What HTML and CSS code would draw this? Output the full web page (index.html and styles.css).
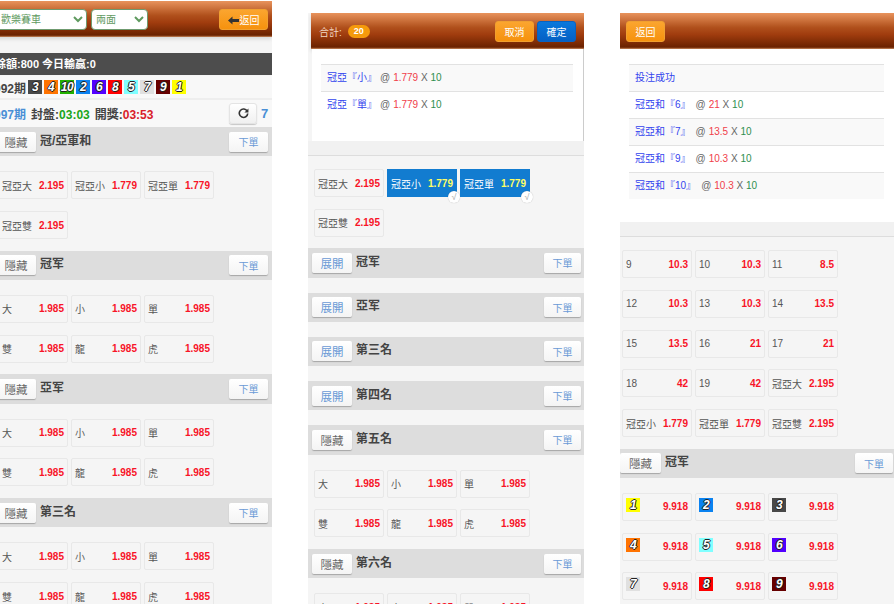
FILE: index.html
```html
<!DOCTYPE html>
<html lang="zh-Hant">
<head>
  <meta charset="UTF-8">
  <title>歡樂賽車</title>
  <link rel="stylesheet" href="styles.css">
</head>
<body>
  <!-- Betting page -->
  <div class="panel panel-left">
    <div class="topbar">
      <select class="game-select"><option>歡樂賽車</option></select>
      <select class="type-select"><option>兩面</option></select>
      <button class="btn-orange btn-back">
        <svg width="11" height="9" viewBox="0 0 11 9"><path d="M0 4.5 4.5 0.5V3H11V6H4.5V8.5Z" fill="#333"/></svg>返回
      </button>
    </div>
    <div class="balance">餘額:800 今日輸贏:0</div>
    <div class="draw-row">
      <span>092期</span>
      <div class="balls">
        <span class="ball c3">3</span><span class="ball c4">4</span><span class="ball c10">10</span><span class="ball c2">2</span><span class="ball c6">6</span><span class="ball c8">8</span><span class="ball c5">5</span><span class="ball c7">7</span><span class="ball c9">9</span><span class="ball c1">1</span>
      </div>
    </div>
    <div class="time-row">
      <span class="period">097期</span>
      <span>封盤:<em class="green">03:03</em></span>
      <span>開獎:<em class="red">03:53</em></span>
      <button class="btn-refresh">
        <svg width="11" height="11" viewBox="0 0 12 12"><path d="M10 3.4A4.6 4.6 0 1 0 10.6 6" fill="none" stroke="#333" stroke-width="1.8"/><path d="M11.4 0.6V5H7Z" fill="#333"/></svg>
      </button>
      <span class="count">7</span>
    </div>

    <div class="sec-head"><button class="btn-toggle">隱藏</button><h4>冠/亞軍和</h4><button class="btn-order">下單</button></div>
    <div class="cells">
      <div class="cell"><span>冠亞大</span><b>2.195</b></div>
      <div class="cell"><span>冠亞小</span><b>1.779</b></div>
      <div class="cell"><span>冠亞單</span><b>1.779</b></div>
      <div class="cell"><span>冠亞雙</span><b>2.195</b></div>
    </div>

    <div class="sec-head"><button class="btn-toggle">隱藏</button><h4>冠军</h4><button class="btn-order">下單</button></div>
    <div class="cells">
      <div class="cell"><span>大</span><b>1.985</b></div>
      <div class="cell"><span>小</span><b>1.985</b></div>
      <div class="cell"><span>單</span><b>1.985</b></div>
      <div class="cell"><span>雙</span><b>1.985</b></div>
      <div class="cell"><span>龍</span><b>1.985</b></div>
      <div class="cell"><span>虎</span><b>1.985</b></div>
    </div>

    <div class="sec-head"><button class="btn-toggle">隱藏</button><h4>亞军</h4><button class="btn-order">下單</button></div>
    <div class="cells">
      <div class="cell"><span>大</span><b>1.985</b></div>
      <div class="cell"><span>小</span><b>1.985</b></div>
      <div class="cell"><span>單</span><b>1.985</b></div>
      <div class="cell"><span>雙</span><b>1.985</b></div>
      <div class="cell"><span>龍</span><b>1.985</b></div>
      <div class="cell"><span>虎</span><b>1.985</b></div>
    </div>

    <div class="sec-head"><button class="btn-toggle">隱藏</button><h4>第三名</h4><button class="btn-order">下單</button></div>
    <div class="cells">
      <div class="cell"><span>大</span><b>1.985</b></div>
      <div class="cell"><span>小</span><b>1.985</b></div>
      <div class="cell"><span>單</span><b>1.985</b></div>
      <div class="cell"><span>雙</span><b>1.985</b></div>
      <div class="cell"><span>龍</span><b>1.985</b></div>
      <div class="cell"><span>虎</span><b>1.985</b></div>
    </div>
  </div>

  <!-- Confirm page -->
  <div class="panel panel-mid">
    <div class="topbar">
      <span class="total">合計:</span><span class="total-badge">20</span>
      <button class="btn-orange btn-cancel">取消</button>
      <button class="btn-blue">確定</button>
    </div>
    <div class="sheet sheet-confirm">
      <div class="bet"><a>冠亞『小』</a><span class="at">@</span><span class="rate">1.779</span> X <span class="amount">10</span></div>
      <div class="bet"><a>冠亞『單』</a><span class="at">@</span><span class="rate">1.779</span> X <span class="amount">10</span></div>
    </div>
    <div class="sheet-foot"></div>

    <div class="cells cells-first">
      <div class="cell"><span>冠亞大</span><b>2.195</b></div>
      <div class="cell selected"><span>冠亞小</span><b>1.779</b><i class="tick">√</i></div>
      <div class="cell selected"><span>冠亞單</span><b>1.779</b><i class="tick">√</i></div>
      <div class="cell"><span>冠亞雙</span><b>2.195</b></div>
    </div>

    <div class="sec-head closed"><button class="btn-toggle blue">展開</button><h4>冠军</h4><button class="btn-order">下單</button></div>
    <div class="sec-head closed"><button class="btn-toggle blue">展開</button><h4>亞军</h4><button class="btn-order">下單</button></div>
    <div class="sec-head closed"><button class="btn-toggle blue">展開</button><h4>第三名</h4><button class="btn-order">下單</button></div>
    <div class="sec-head closed"><button class="btn-toggle blue">展開</button><h4>第四名</h4><button class="btn-order">下單</button></div>

    <div class="sec-head"><button class="btn-toggle">隱藏</button><h4>第五名</h4><button class="btn-order">下單</button></div>
    <div class="cells">
      <div class="cell"><span>大</span><b>1.985</b></div>
      <div class="cell"><span>小</span><b>1.985</b></div>
      <div class="cell"><span>單</span><b>1.985</b></div>
      <div class="cell"><span>雙</span><b>1.985</b></div>
      <div class="cell"><span>龍</span><b>1.985</b></div>
      <div class="cell"><span>虎</span><b>1.985</b></div>
    </div>

    <div class="sec-head"><button class="btn-toggle">隱藏</button><h4>第六名</h4><button class="btn-order">下單</button></div>
    <div class="cells">
      <div class="cell"><span>大</span><b>1.985</b></div>
      <div class="cell"><span>小</span><b>1.985</b></div>
      <div class="cell"><span>單</span><b>1.985</b></div>
    </div>
  </div>

  <!-- Result page -->
  <div class="panel panel-right">
    <div class="topbar">
      <button class="btn-orange btn-return">返回</button>
    </div>
    <div class="sheet sheet-result">
      <div class="bet"><a>投注成功</a></div>
      <div class="bet"><a>冠亞和『6』</a><span class="at">@</span><span class="rate">21</span> X <span class="amount">10</span></div>
      <div class="bet"><a>冠亞和『7』</a><span class="at">@</span><span class="rate">13.5</span> X <span class="amount">10</span></div>
      <div class="bet"><a>冠亞和『9』</a><span class="at">@</span><span class="rate">10.3</span> X <span class="amount">10</span></div>
      <div class="bet"><a>冠亞和『10』</a><span class="at">@</span><span class="rate">10.3</span> X <span class="amount">10</span></div>
    </div>
    <div class="sheet-foot"></div>

    <div class="cells cells-first">
      <div class="cell"><span>9</span><b>10.3</b></div>
      <div class="cell"><span>10</span><b>10.3</b></div>
      <div class="cell"><span>11</span><b>8.5</b></div>
      <div class="cell"><span>12</span><b>10.3</b></div>
      <div class="cell"><span>13</span><b>10.3</b></div>
      <div class="cell"><span>14</span><b>13.5</b></div>
      <div class="cell"><span>15</span><b>13.5</b></div>
      <div class="cell"><span>16</span><b>21</b></div>
      <div class="cell"><span>17</span><b>21</b></div>
      <div class="cell"><span>18</span><b>42</b></div>
      <div class="cell"><span>19</span><b>42</b></div>
      <div class="cell"><span>冠亞大</span><b>2.195</b></div>
      <div class="cell"><span>冠亞小</span><b>1.779</b></div>
      <div class="cell"><span>冠亞單</span><b>1.779</b></div>
      <div class="cell"><span>冠亞雙</span><b>2.195</b></div>
    </div>

    <div class="sec-head"><button class="btn-toggle">隱藏</button><h4>冠军</h4><button class="btn-order">下單</button></div>
    <div class="cells">
      <div class="cell cell-ball"><span class="ball c1">1</span><b>9.918</b></div>
      <div class="cell cell-ball"><span class="ball c2">2</span><b>9.918</b></div>
      <div class="cell cell-ball"><span class="ball c3">3</span><b>9.918</b></div>
      <div class="cell cell-ball"><span class="ball c4">4</span><b>9.918</b></div>
      <div class="cell cell-ball"><span class="ball c5">5</span><b>9.918</b></div>
      <div class="cell cell-ball"><span class="ball c6">6</span><b>9.918</b></div>
      <div class="cell cell-ball"><span class="ball c7">7</span><b>9.918</b></div>
      <div class="cell cell-ball"><span class="ball c8">8</span><b>9.918</b></div>
      <div class="cell cell-ball"><span class="ball c9">9</span><b>9.918</b></div>
    </div>
  </div>
</body>
</html>
```

FILE: styles.css
```css
body {
  display: flex;
  gap: 36px;
  width: 894px;
  height: 604px;
  margin: 0;
  overflow: hidden;
  background: #fff;
  font-family: "Liberation Sans", "Noto Sans CJK TC", sans-serif;
  font-size: 10px;
  color: #555;
}

.panel {
  flex: none;
  width: 276px;
  margin-top: 13px;
  overflow: hidden;
  background: #f5f5f5;
}

.panel-left {
  width: 280px;
  margin-top: 1px;
  margin-left: -8px;
}

/* top bar */
.topbar {
  display: flex;
  align-items: center;
  box-sizing: border-box;
  height: 36px;
  padding: 0 4px;
  background: linear-gradient(#e8935c, #b0501c 40%, #a03c0e 60%, #6a2200 95%, #c98a5e);
  box-shadow: 0 2px 4px rgba(0, 0, 0, 0.12);
}

.panel-mid .topbar {
  margin-left: 3px;
  padding: 0 8px;
}

.topbar select {
  height: 21px;
  margin-right: 4px;
  border: 1px solid #6f9a6f;
  border-radius: 4px;
  background: #fff;
  color: #5f9a5f;
  font-family: inherit;
  font-size: 10px;
}

.game-select {
  width: 91px;
}

.type-select {
  width: 57px;
}

button {
  font-family: inherit;
  cursor: pointer;
}

.btn-orange {
  height: 21px;
  padding: 0;
  border: 1px solid #f0a030;
  border-radius: 3px;
  background: linear-gradient(#fba52f, #f6920e);
  color: #fff;
  font-size: 10px;
}

.btn-back {
  width: 49px;
  margin-left: auto;
}

.btn-back svg {
  margin-right: 1px;
  vertical-align: -1px;
}

.btn-cancel {
  width: 39px;
  margin-left: auto;
}

.btn-blue {
  width: 39px;
  height: 21px;
  margin-left: 3px;
  padding: 0;
  border: 1px solid #0a62c0;
  border-radius: 3px;
  background: linear-gradient(#0a78dc, #0560c4);
  color: #fff;
  font-size: 10px;
}

.btn-return {
  width: 39px;
  margin-left: 2px;
}

.total {
  color: #f0d8c4;
}

.total-badge {
  width: 22px;
  margin-left: 6px;
  border-radius: 7px;
  background: #f59a0c;
  color: #fff;
  font-size: 9px;
  font-weight: bold;
  line-height: 13px;
  text-align: center;
}

/* status rows */
.balance {
  margin-top: 16px;
  padding-left: 3px;
  background: #4d4d4d;
  color: #fff;
  font-size: 11px;
  font-weight: bold;
  line-height: 22px;
}

.draw-row {
  display: flex;
  align-items: center;
  height: 22px;
  margin-top: 1px;
  padding-left: 2px;
  border-bottom: 2px solid #eee;
  background: #f8f8f8;
  color: #444;
  font-size: 12px;
  font-weight: bold;
}

.balls {
  display: flex;
  gap: 2px;
  margin-left: 2px;
}

.ball {
  display: block;
  flex: none;
  width: 14px;
  height: 14px;
  color: #fff;
  font-size: 12px;
  font-style: italic;
  font-weight: bold;
  letter-spacing: -0.5px;
  line-height: 14px;
  text-align: center;
  text-shadow: -1px 0 #222, 1px 0 #222, 0 -1px #222, 0 1px #222;
}

.c1 { background: #ff0; }
.c2 { background: #0a82f0; }
.c3 { background: #484848; }
.c4 { background: #ff7300; }
.c5 { background: #80ffff; }
.c6 { background: #5200ff; }
.c7 { background: #e0e0e0; }
.c8 { background: #f00; }
.c9 { background: #660000; }
.c10 { background: #22b000; }

.time-row {
  display: flex;
  align-items: center;
  gap: 5px;
  height: 27px;
  padding: 0 4px 0 2px;
  background: #f8f8f8;
  color: #444;
  font-size: 12px;
  font-weight: bold;
}

.time-row em {
  font-style: normal;
}

.period,
.count {
  color: #4a8fd6;
}

.green {
  color: #1aa51a;
}

.red {
  color: #d9202a;
}

.btn-refresh {
  display: flex;
  align-items: center;
  justify-content: center;
  width: 28px;
  height: 21px;
  margin-left: auto;
  padding: 0;
  border: 1px solid #e4e4e4;
  border-radius: 3px;
  background: linear-gradient(#fff, #f0f0f0);
  box-shadow: 0 1px 1px rgba(0, 0, 0, 0.2);
}

.count {
  width: 7px;
  margin-left: -1px;
  font-size: 13px;
}

/* result sheets */
.sheet {
  box-sizing: border-box;
  padding: 15px 12px 0 9px;
  background: #fff;
}

.sheet-confirm {
  height: 92px;
  margin-left: 4px;
  padding: 15px 10px 0 9px;
  border-right: 1px solid #ccc;
}

.sheet-result {
  height: 173px;
}

.sheet-foot {
  box-sizing: border-box;
  height: 15px;
  border-bottom: 1px solid #ddd;
  background: #f1f1f1;
}

.bet {
  box-sizing: border-box;
  height: 27px;
  padding-left: 6px;
  border-top: 1px solid #e2e2e2;
  background: #fff;
  color: #666;
  font-size: 10px;
  line-height: 26px;
}

.bet:nth-child(odd) {
  background: #f9f9f9;
}

.bet a {
  color: #3344ee;
}

.at {
  margin-left: 5px;
}

.panel-mid .at {
  margin-left: 3px;
}

.rate {
  margin-left: 3px;
  color: #f0404a;
}

.amount {
  color: #2f8f4f;
}

/* sections */
.sec-head {
  display: flex;
  box-sizing: border-box;
  height: 29.25px;
  padding: 4.5px 4px 0;
  background: #ddd;
}

.sec-head.closed {
  margin-bottom: 15px;
}

.sec-head h4 {
  margin: 0 0 0 4px;
  color: #444;
  font-size: 12px;
  font-weight: bold;
  line-height: 18px;
}

.btn-toggle,
.btn-order {
  height: 20px;
  padding: 0;
  border: none;
  border-radius: 2px;
  background: linear-gradient(#fff, #f4f4f4);
  box-shadow: 0 1px 1px rgba(0, 0, 0, 0.25);
}

.btn-toggle {
  width: 40px;
  color: #666;
  font-size: 11.5px;
}

.btn-toggle.blue {
  color: #6a9ad6;
}

.btn-order {
  width: 39px;
  margin-left: auto;
  color: #6a9ad6;
  font-size: 10px;
}

.panel-mid .btn-order {
  width: 37px;
}

.panel-mid .sec-head {
  padding-right: 3px;
}

.cells {
  display: grid;
  grid-template-columns: repeat(3, 70px);
  gap: 11.75px 3px;
  padding: 15px 0 11.7px 6px;
}

.cells-first {
  padding-top: 13px;
}

.cell {
  position: relative;
  display: flex;
  align-items: center;
  justify-content: space-between;
  box-sizing: border-box;
  height: 28px;
  padding: 0 3px;
  border: 1px solid #e8e8e8;
  border-radius: 2px;
  background: #f5f5f5;
}

.cell b {
  color: #f81428;
  font-size: 10px;
}

.cell.selected {
  border-color: #127cd0;
  border-radius: 0;
  background: #127cd0;
  color: #fff;
}

.cell.selected b {
  color: #ffff66;
}

.tick {
  position: absolute;
  right: -4px;
  bottom: -7px;
  width: 12px;
  height: 12px;
  border-radius: 50%;
  background: #fff;
  box-shadow: 0 0 1px rgba(0, 0, 0, 0.3);
  color: #aaa;
  font-size: 9px;
  font-style: normal;
  line-height: 12px;
  text-align: center;
}

.cell-ball .ball {
  align-self: flex-start;
  margin-top: 4px;
}

.panel-right .sec-head {
  padding-left: 0;
  padding-right: 3px;
}

.panel-right .btn-toggle {
  width: 41px;
}

.panel-right .btn-order {
  width: 38px;
}

.panel-right .cells {
  padding-left: 2px;
}
```
